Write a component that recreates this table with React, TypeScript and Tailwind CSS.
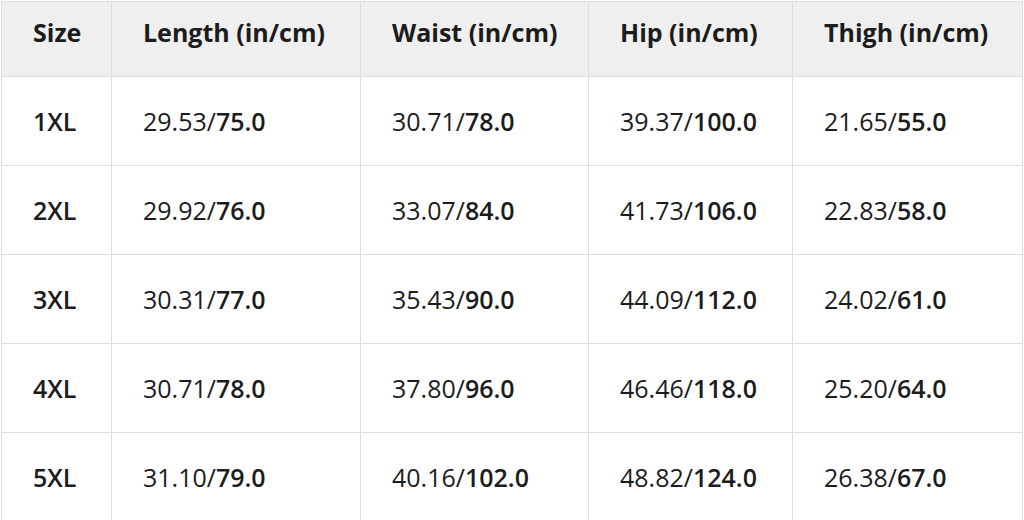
const headers = ["Size", "Length (in/cm)", "Waist (in/cm)", "Hip (in/cm)", "Thigh (in/cm)"];

const data: { size: string; cells: [string, string][] }[] = [
  { size: "1XL", cells: [["29.53", "75.0"], ["30.71", "78.0"], ["39.37", "100.0"], ["21.65", "55.0"]] },
  { size: "2XL", cells: [["29.92", "76.0"], ["33.07", "84.0"], ["41.73", "106.0"], ["22.83", "58.0"]] },
  { size: "3XL", cells: [["30.31", "77.0"], ["35.43", "90.0"], ["44.09", "112.0"], ["24.02", "61.0"]] },
  { size: "4XL", cells: [["30.71", "78.0"], ["37.80", "96.0"], ["46.46", "118.0"], ["25.20", "64.0"]] },
  { size: "5XL", cells: [["31.10", "79.0"], ["40.16", "102.0"], ["48.82", "124.0"], ["26.38", "67.0"]] },
];

export default function App() {
  return (
    <div className="w-[1024px] h-[520px] overflow-hidden bg-white font-['Open_Sans',sans-serif] text-[#1c1c1c]">
      <div className="ml-px mt-px w-[1022px] grid grid-cols-[109px_248px_227px_203px_229px] grid-rows-[74px_repeat(5,88px)] gap-px p-px bg-[#dddddd]">
        {headers.map((h) => (
          <div key={h} className="flex items-center pl-[31px] pb-[12px] bg-[#efefef] text-[25px] font-bold">
            {h}
          </div>
        ))}
        {data.map((r) => [
          <div key={r.size} className="flex items-center pl-[31px] pt-[2px] bg-white text-[25px] font-semibold">
            {r.size}
          </div>,
          ...r.cells.map(([inch, cm], i) => (
            <div key={r.size + i} className="flex items-center pl-[31px] pt-[2px] bg-white text-[25px]">
              {inch}/<span className="font-semibold">{cm}</span>
            </div>
          )),
        ])}
      </div>
    </div>
  );
}
